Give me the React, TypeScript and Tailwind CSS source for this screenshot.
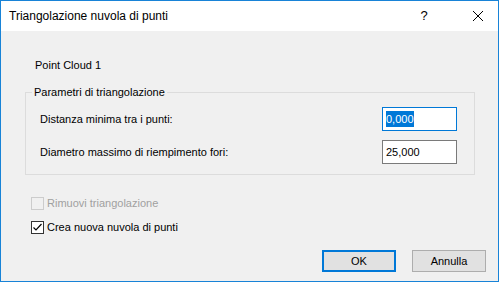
import React from 'react';

const font = { fontFamily: '"Liberation Sans", Arial, sans-serif' };

export default function App() {
    return (
        <div
            className="w-[499px] h-[282px] border border-[#1883d7] bg-[#f0f0f0] flex flex-col text-black"
            style={font}
        >
            {/* title bar */}
            <div className="h-[30px] bg-white flex items-center pl-[8px]">
                <span className="text-[12px] text-[#000] flex-1">Triangolazione nuvola di punti</span>
                <span className="text-[13px] w-[20px] text-center mr-[18px]">?</span>
                <svg width="46" height="30" viewBox="0 0 46 30" aria-hidden="true">
                    <path d="M21 10 L31 20 M31 10 L21 20" stroke="#000" strokeWidth="1" fill="none" />
                </svg>
            </div>

            {/* body */}
            <div className="flex-1 flex flex-col text-[11px] pl-[24px] pr-[23px]">
                <div className="pl-[10px] pt-[28px] leading-[13px]">Point Cloud 1</div>

                <fieldset className="mt-[14px] border border-[#dcdcdc] h-[89px]">
                    <legend className="ml-[6px] px-[2px] leading-[13px]">Parametri di triangolazione</legend>
                    <div className="pl-[14px] pr-[17px]">
                        <div className="flex items-center justify-between mt-[8px] h-[24px]">
                            <span>Distanza minima tra i punti:</span>
                            <div className="w-[75px] h-[24px] border border-[#0078d7] bg-white flex items-center pl-[3px]">
                                <span className="bg-[#0078d7] text-white leading-[16px]">0,000</span>
                            </div>
                        </div>
                        <div className="flex items-center justify-between mt-[9px] h-[24px]">
                            <span>Diametro massimo di riempimento fori:</span>
                            <div className="w-[75px] h-[24px] border border-[#7a7a7a] bg-white flex items-center pl-[3px]">
                                <span className="leading-[16px]">25,000</span>
                            </div>
                        </div>
                    </div>
                </fieldset>

                <div className="flex items-center gap-[3px] pl-[6px] mt-[22px] h-[13px]">
                    <span className="w-[13px] h-[13px] border border-[#cccccc] bg-[#f0f0f0]" />
                    <span className="text-[#a0a0a0]">Rimuovi triangolazione</span>
                </div>
                <div className="flex items-center gap-[3px] pl-[6px] mt-[11px] h-[13px]">
                    <span className="w-[13px] h-[13px] border border-[#333333] bg-white flex items-center justify-center">
                        <svg width="11" height="11" viewBox="0 0 11 11" aria-hidden="true">
                            <path d="M1.5 5.5 L4 8 L9.5 2" stroke="#000" strokeWidth="1.2" fill="none" />
                        </svg>
                    </span>
                    <span>Crea nuova nuvola di punti</span>
                </div>

                <div className="flex justify-end gap-[16px] mt-[16px]">
                    <button className="w-[74px] h-[22px] border-2 border-[#0078d7] bg-[#e1e1e1] text-[11px]">OK</button>
                    <button className="w-[74px] h-[22px] border border-[#adadad] bg-[#e1e1e1] text-[11px] mr-[-11px]">
                        Annulla
                    </button>
                </div>
            </div>
        </div>
    );
}
